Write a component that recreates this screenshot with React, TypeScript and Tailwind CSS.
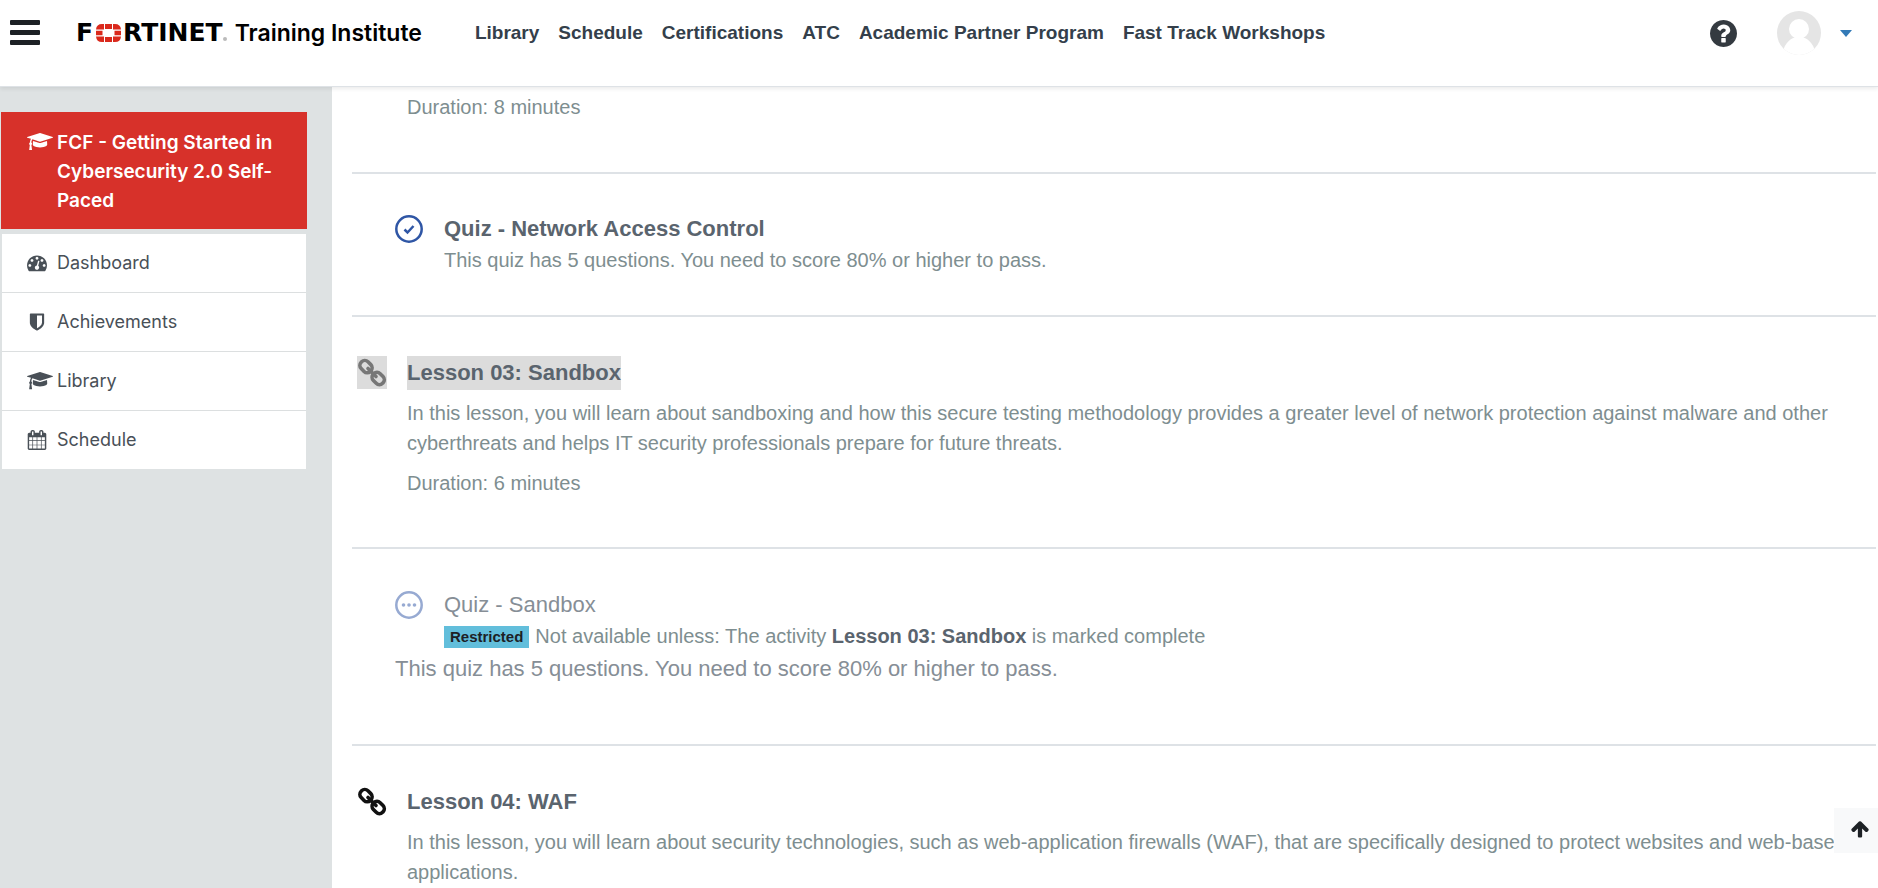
import React from "react";

type IconProps = { className?: string };

const Glyph = ({ d, box, className }: { d: string; box: string; className?: string }) => (
  <svg viewBox={box} className={className} fill="currentColor" aria-hidden="true">
    <path d={d} />
  </svg>
);

const CapIcon = ({ className }: IconProps) => (
  <Glyph
    className={className}
    box="0 128 2304 1536"
    d="M1774 836l18 316q4 69-82 128t-235 93.500-323 34.500-323-34.500-235-93.500-82-128l18-316 574 181q22 7 48 7t48-7zM2304 512q0 23-22 31l-1120 352q-4 1-10 1t-10-1l-652-206q-43 34-71 111.500t-34 178.500q63 36 63 109 0 69-58 107l58 433q2 14-8 25-9 11-24 11h-192q-15 0-24-11-10-11-8-25l58-433q-58-38-58-107 0-73 65-111 11-207 98-330l-333-104q-22-8-22-31t22-31l1120-352q4-1 10-1t10 1l1120 352q22 8 22 31z"
  />
);

const GaugeIcon = ({ className }: IconProps) => (
  <Glyph
    className={className}
    box="0 128 1792 1664"
    d="M384 1152q0-53-37.500-90.500t-90.500-37.500-90.500 37.500-37.500 90.500 37.500 90.500 90.500 37.500 90.500-37.500 37.500-90.500zM576 704q0-53-37.500-90.500t-90.500-37.500-90.500 37.500-37.500 90.500 37.500 90.500 90.500 37.500 90.500-37.500 37.500-90.500zM1004 1185l101-382q6-26-7.500-48.500t-38.500-29.500-48 6.500-30 39.500l-101 382q-60 5-107 43.500t-63 98.500q-20 77 20 146t117 89 146-20 89-117q16-60-6-117t-72-91zM1664 1152q0-53-37.500-90.500t-90.500-37.500-90.500 37.500-37.500 90.500 37.500 90.500 90.500 37.500 90.500-37.500 37.500-90.500zM1024 512q0-53-37.500-90.500t-90.500-37.500-90.500 37.500-37.500 90.500 37.500 90.500 90.500 37.500 90.500-37.500 37.500-90.500zM1472 704q0-53-37.500-90.500t-90.500-37.500-90.500 37.500-37.500 90.500 37.500 90.500 90.500 37.500 90.500-37.500 37.500-90.500zM1792 1152q0 261-141 483-19 29-54 29h-1402q-35 0-54-29-141-221-141-483 0-182 71-348t191-286 286-191 348-71 348 71 286 191 191 286 71 348z"
  />
);

const ShieldIcon = ({ className }: IconProps) => (
  <Glyph
    className={className}
    box="0 0 1792 1792"
    d="M1344 960v-640h-448v1137q119-63 213-137 235-184 235-360zM1536 192v768q0 86-33.500 170.500t-83 150-118 127.500-126.500 103-121 77.500-89.500 49.500-42.500 20q-12 6-26 6t-26-6q-16-7-42.500-20t-89.500-49.500-121-77.500-126.500-103-118-127.500-83-150-33.500-170.500v-768q0-26 19-45t45-19h1152q26 0 45 19t19 45z"
  />
);

const CalendarIcon = ({ className }: IconProps) => (
  <Glyph
    className={className}
    box="0 0 1792 1792"
    d="M192 1664h288v-288h-288v288zM544 1664h320v-288h-320v288zM192 1312h288v-320h-288v320zM544 1312h320v-320h-320v320zM192 928h288v-288h-288v288zM928 1664h320v-288h-320v288zM544 928h320v-288h-320v288zM1312 1664h288v-288h-288v288zM928 1312h320v-320h-320v320zM576 448v-288q0-13-9.500-22.500t-22.500-9.500h-64q-13 0-22.500 9.500t-9.500 22.500v288q0 13 9.500 22.500t22.500 9.500h64q13 0 22.500-9.500t9.500-22.500zM1312 1312h288v-320h-288v320zM928 928h320v-288h-320v288zM1312 928h288v-288h-288v288zM1344 448v-288q0-13-9.500-22.500t-22.500-9.500h-64q-13 0-22.500 9.500t-9.500 22.500v288q0 13 9.500 22.500t22.500 9.500h64q13 0 22.500-9.500t9.500-22.500zM1728 384v1280q0 52-38 90t-90 38h-1408q-52 0-90-38t-38-90v-1280q0-52 38-90t90-38h128v-96q0-66 47-113t113-47h64q66 0 113 47t47 113v96h384v-96q0-66 47-113t113-47h64q66 0 113 47t47 113v96h128q52 0 90 38t38 90z"
  />
);

const HelpIcon = ({ className }: IconProps) => (
  <Glyph
    className={className}
    box="128 128 1536 1536"
    d="M1024 1376v-192q0-14-9-23t-23-9h-192q-14 0-23 9t-9 23v192q0 14 9 23t23 9h192q14 0 23-9t9-23zM1280 704q0-88-55.500-163t-138.500-116-170-41q-243 0-371 213-15 24 8 42l132 100q7 6 19 6 16 0 25-12 53-68 86-92 34-24 86-24 48 0 85.500 26t37.500 59q0 38-20 61t-68 45q-63 28-115.500 86.500t-52.500 125.500v36q0 14 9 23t23 9h192q14 0 23-9t9-23q0-19 21.500-49.500t54.500-49.500q32-18 49-28.500t46-35 44.500-48 28-60.500 12.500-81zM1664 896q0 209-103 385.500t-279.500 279.500-385.500 103-385.500-103-279.500-279.500-103-385.500 103-385.500 279.500-279.500 385.500-103 385.500 103 279.500 279.500 103 385.500z"
  />
);

const ArrowUpIcon = ({ className }: IconProps) => (
  <Glyph
    className={className}
    box="0 0 1792 1792"
    d="M1675 971q0 51-37 90l-75 75q-38 38-91 38-54 0-90-38l-294-293v704q0 52-37.500 84.500t-90.500 32.500h-128q-53 0-90.500-32.500t-37.500-84.500v-704l-294 293q-36 38-90 38t-90-38l-75-75q-38-38-38-90 0-53 38-91l651-651q35-37 90-37 54 0 91 37l651 651q37 39 37 91z"
  />
);

const LinkIcon = ({ className }: IconProps) => (
  <svg viewBox="0 0 30 33" className={className} fill="none" stroke="currentColor" strokeWidth="3.600" aria-hidden="true">
    <rect x="2.500" y="5.800" width="13" height="9.600" rx="4.500" transform="rotate(45 9 10.600)" />
    <rect x="14.700" y="17.700" width="13" height="9.600" rx="4.500" transform="rotate(45 21.200 22.500)" />
    <path d="M11 12.500l8 8" strokeLinecap="round" />
  </svg>
);

const DoneIcon = ({ className }: IconProps) => (
  <svg viewBox="0 0 28 28" className={className} fill="none" stroke="currentColor" aria-hidden="true">
    <circle cx="14" cy="14" r="12.700" strokeWidth="2.500" />
    <path d="M9.500 14.500l3 3 6-6.500" strokeWidth="2.500" />
  </svg>
);

const PendingIcon = ({ className }: IconProps) => (
  <svg viewBox="0 0 28 28" className={className} fill="currentColor" aria-hidden="true">
    <circle cx="14" cy="14" r="12.700" fill="none" stroke="currentColor" strokeWidth="2.500" />
    <circle cx="8.500" cy="14" r="1.800" />
    <circle cx="14" cy="14" r="1.800" />
    <circle cx="19.500" cy="14" r="1.800" />
  </svg>
);

const BrandMark = ({ className }: IconProps) => (
  <svg viewBox="0 0 25 18" className={className} fill="#da291c" aria-hidden="true">
    <path d="M0 5.500Q.5 0 6 0H8V5.500zM9 0h7v5H9zM17 0h2Q24.500 0 25 5.500H17zM0 6.700h6.500v4.600H0zM18.500 6.700H25v4.600h-6.500zM0 12.500h8V18H6Q.5 18 0 12.500zM9 13h7v5H9zM17 12.500h8Q24.500 18 19 18h-2z" />
  </svg>
);

const navLinks = ["Library", "Schedule", "Certifications", "ATC", "Academic Partner Program", "Fast Track Workshops"];

const sideLinks = [
  { label: "Dashboard", icon: <GaugeIcon className="w-5" /> },
  { label: "Achievements", icon: <ShieldIcon className="w-5" /> },
  { label: "Library", icon: <CapIcon className="w-[26px]" /> },
  { label: "Schedule", icon: <CalendarIcon className="w-5" /> },
];

function Header() {
  return (
    <header className="relative z-10 flex h-[87px] shrink-0 items-start border-b border-[#dee2e6] bg-white px-2.5 shadow-[0_2px_4px_rgba(0,0,0,0.08)]">
      <button type="button" aria-label="Menu" className="mt-5 flex flex-col gap-[5px]">
        <span className="h-[5px] w-[30px] rounded-[1px] bg-[#1d2125]" />
        <span className="h-[5px] w-[30px] rounded-[1px] bg-[#1d2125]" />
        <span className="h-[5px] w-[30px] rounded-[1px] bg-[#1d2125]" />
      </button>
      <a href="#" className="ml-9 flex h-[66px] items-center text-black">
        <span className="font-['DejaVu_Sans'] text-[25px] font-bold">F</span>
        <BrandMark className="ml-[3px] h-[18px] w-[25px]" />
        <span className="ml-0.5 font-['DejaVu_Sans'] text-[25px] font-bold">RTINET</span>
        <span className="mt-3 h-1 w-1 rounded-full bg-[#bbbbbb]" />
        <span className="ml-2 font-[Inter] text-[23px] font-semibold">Training Institute</span>
      </a>
      <nav className="ml-[53px] flex h-[66px] items-center gap-[19px] text-[19px] font-bold text-[#343f4b]">
        {navLinks.map((n) => (
          <a key={n} href="#" className="whitespace-nowrap">{n}</a>
        ))}
      </nav>
      <div className="ml-auto flex h-[66px] items-center pr-4">
        <button type="button" aria-label="Help"><HelpIcon className="w-[27px] text-[#343a40]" /></button>
        <button type="button" aria-label="User menu" className="ml-10 flex items-center gap-[19px]">
          <svg viewBox="0 0 44 44" className="w-11" aria-hidden="true">
            <defs><clipPath id="disc"><circle cx="22" cy="22" r="22" /></clipPath></defs>
            <g clipPath="url(#disc)">
              <rect width="44" height="44" fill="#e5e5e5" />
              <circle cx="22" cy="18" r="10" fill="#fff" />
              <path d="M5 44Q8 29 18 26.500h8Q36 29 39 44z" fill="#fff" />
            </g>
          </svg>
          <svg viewBox="0 0 12 7" className="w-3" aria-hidden="true"><path d="M0 0h12L6 7z" fill="#337ab7" /></svg>
        </button>
      </div>
    </header>
  );
}

function Sidebar() {
  return (
    <aside className="w-[332px] shrink-0 bg-[#dee2e3] pt-[25px] font-[Inter] text-lg">
      <a href="#" className="mr-[25px] ml-px flex h-[117px] bg-[#d7312a] pt-4 pl-[26px] text-[19px] font-semibold text-white">
        <span className="w-[30px] shrink-0 pt-[5px]"><CapIcon className="w-[26px]" /></span>
        <span className="pr-4 leading-[29px]">FCF - Getting Started in Cybersecurity 2.0 Self-Paced</span>
      </a>
      <ul className="mt-[5px] mr-[26px] ml-0.5 divide-y divide-[#dcdfe0] bg-white text-[#495057]">
        {sideLinks.map((s) => (
          <li key={s.label}>
            <a href="#" className="flex h-[58px] items-center pl-[25px]">
              <span className="w-[30px] shrink-0">{s.icon}</span>
              {s.label}
            </a>
          </li>
        ))}
      </ul>
    </aside>
  );
}

function Lesson({ title, selected, children }: { title: string; selected?: boolean; children: React.ReactNode }) {
  return (
    <div className="flex pl-[5px]">
      <span className={selected ? "mr-5 h-[33px] w-[30px] shrink-0 bg-[#dcdcdc] text-[#777777]" : "mr-5 h-[33px] w-[30px] shrink-0 text-[#111111]"}>
        <LinkIcon className="w-[30px]" />
      </span>
      <div className="pr-4">
        <h3 className="text-[22px] leading-[34px] font-bold text-[#5a646e]">
          <a href="#" className={selected ? "inline-block bg-[#dcdcdc]" : "inline-block"}>{title}</a>
        </h3>
        <div className="mt-2 space-y-2.5 text-xl leading-[30px] text-[#7e8e90]">{children}</div>
      </div>
    </div>
  );
}

function Content() {
  return (
    <main className="min-w-0 flex-1 bg-white pr-0.5 pl-5 font-['Liberation_Sans',sans-serif]">
      <ul className="divide-y-2 divide-[#dee2e6]">
        <li className="h-[87px] pt-[5px] pl-[55px] text-xl leading-[30px] text-[#7e8e90]">Duration: 8 minutes</li>
        <li className="flex h-[143px] pt-[41px] pl-[43px]">
          <DoneIcon className="mr-[21px] h-7 w-7 shrink-0 text-[#2f56a5]" />
          <div>
            <h3 className="text-[22px] leading-7 font-bold text-[#5a646e]"><a href="#">Quiz - Network Access Control</a></h3>
            <p className="text-xl leading-[35px] text-[#7e8e90]">This quiz has 5 questions. You need to score 80% or higher to pass.</p>
          </div>
        </li>
        <li className="h-[232px] pt-[39px]">
          <Lesson title="Lesson 03: Sandbox" selected>
            <p>In this lesson, you will learn about sandboxing and how this secure testing methodology provides a greater level of network protection against malware and other cyberthreats and helps IT security professionals prepare for future threats.</p>
            <p>Duration: 6 minutes</p>
          </Lesson>
        </li>
        <li className="h-[197px] pt-[42px] pl-[43px]">
          <div className="flex">
            <PendingIcon className="mr-[21px] h-7 w-7 shrink-0 text-[#97aad2]" />
            <div>
              <h3 className="text-[22px] leading-7 text-[#868e96]">Quiz - Sandbox</h3>
              <p className="flex items-center gap-1.5 text-xl leading-[35px] text-[#7e8e90]">
                <span className="bg-[#62bedb] px-1.5 text-[15px] leading-[22px] font-bold text-[#1d2125]">Restricted</span>
                <span>Not available unless: The activity <strong className="text-[#5a646e]">Lesson 03: Sandbox</strong> is marked complete</span>
              </p>
            </div>
          </div>
          <p className="text-[22px] leading-[30px] text-[#868e96]">This quiz has 5 questions. You need to score 80% or higher to pass.</p>
        </li>
        <li className="pt-[39px]">
          <Lesson title="Lesson 04: WAF">
            <p>In this lesson, you will learn about security technologies, such as web-application firewalls (WAF), that are specifically designed to protect websites and web-based applications.</p>
          </Lesson>
        </li>
      </ul>
    </main>
  );
}

export default function App() {
  return (
    <div className="flex h-screen flex-col overflow-hidden bg-white font-['Liberation_Sans',sans-serif]">
      <Header />
      <div className="flex min-h-0 flex-1">
        <Sidebar />
        <Content />
      </div>
      <button type="button" aria-label="Back to top" className="fixed right-0 bottom-[35px] z-20 flex h-[45px] w-11 items-center justify-center bg-[#f8f9fa] pb-1 pl-2 text-[#1d2125]">
        <ArrowUpIcon className="h-5 w-5" />
      </button>
    </div>
  );
}
